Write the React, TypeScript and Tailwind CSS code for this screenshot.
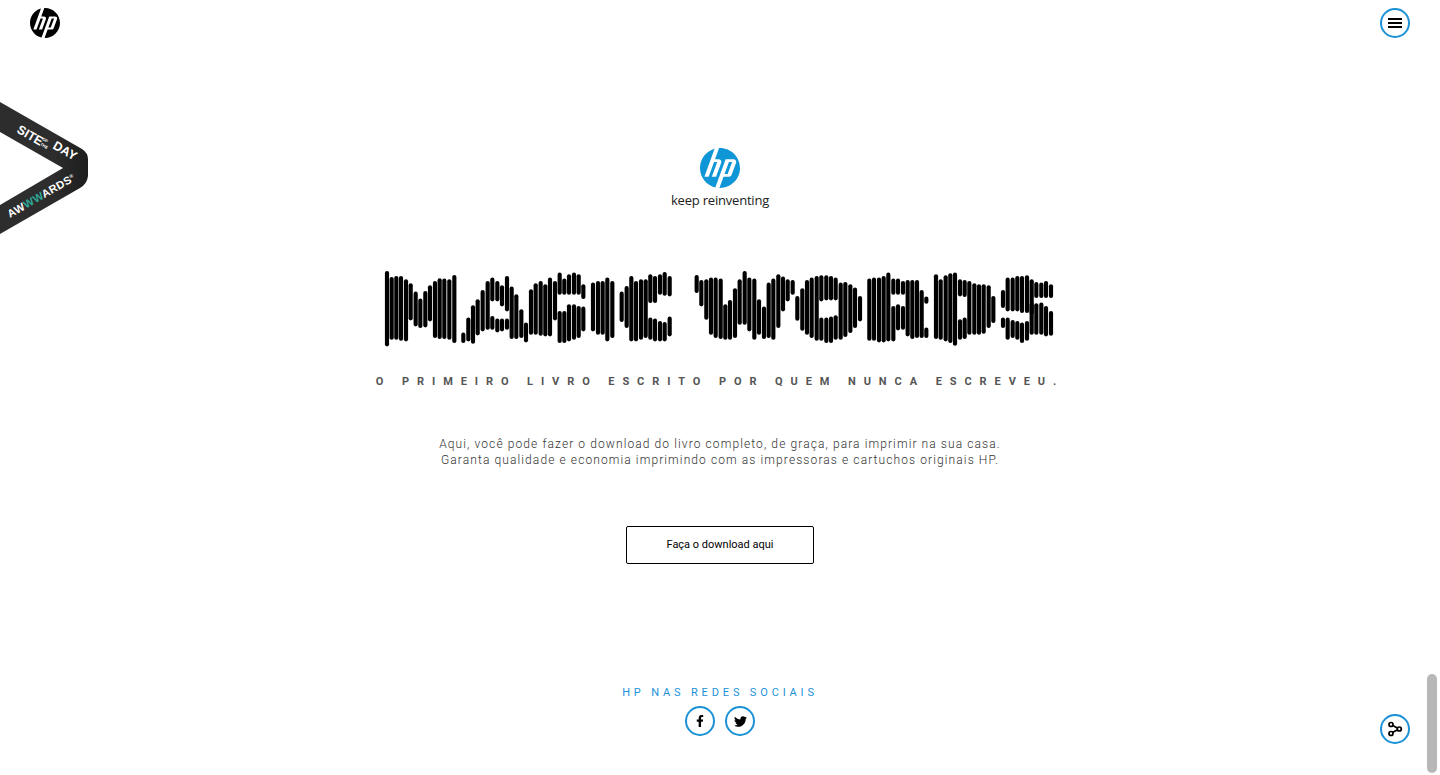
import { FaFacebookF, FaTwitter } from 'react-icons/fa';
import { SiHp } from 'react-icons/si';

// bars of the "magic words" logo: [x, top, bottom, top2?, bottom2?] in 1/3 px
const bars: number[][] = [
    [36, 38, 258], [50, 56, 238], [64, 53, 238], [78, 53, 241], [93, 63, 243], [107, 75, 180], [122, 100, 198], [136, 121, 203],
    [151, 98, 201], [165, 81, 183], [180, 68, 233], [194, 60, 236], [208, 61, 236], [223, 63, 238], [238, 50, 248],
    [265, 223, 248], [280, 178, 243], [294, 141, 250], [308, 123, 225], [323, 95, 213], [338, 68, 208], [352, 58, 123, 173, 208],
    [367, 68, 123, 181, 216], [381, 81, 138, 181, 213], [396, 53, 153, 181, 208], [410, 85, 236], [424, 108, 236], [439, 153, 233], [453, 193, 246],
    [468, 93, 223], [482, 75, 223], [497, 68, 226], [511, 78, 228], [525, 58, 228], [540, 68, 180], [554, 43, 103, 158, 248],
    [568, 61, 103, 158, 248], [582, 48, 103, 138, 243], [597, 43, 103, 138, 238], [611, 48, 103, 143, 233], [625, 78, 116, 145, 213],
    [654, 73, 213], [669, 68, 223], [683, 68, 223], [697, 58, 243], [712, 68, 233],
    [740, 100, 185], [755, 83, 203], [769, 53, 243], [783, 68, 243], [798, 63, 238], [812, 63, 233], [826, 48, 128, 178, 238],
    [840, 53, 128, 181, 243], [855, 48, 103, 188, 243], [869, 41, 106, 191, 243], [884, 53, 108, 175, 228],
    [965, 50, 98], [979, 65, 138], [994, 63, 178], [1008, 58, 223], [1022, 58, 233], [1037, 61, 236],
    [1051, 138, 238], [1065, 125, 238], [1080, 90, 233], [1094, 63, 193], [1109, 38, 193], [1123, 58, 213], [1138, 61, 238],
    [1152, 123, 223], [1167, 145, 236], [1181, 73, 233], [1195, 61, 238], [1210, 48, 203], [1224, 55, 153], [1238, 63, 123], [1253, 65, 103],
    [1267, 113, 181], [1282, 90, 211], [1296, 65, 223], [1310, 58, 233], [1325, 53, 241], [1339, 51, 123, 178, 241],
    [1354, 51, 120, 178, 248], [1368, 53, 120, 175, 248], [1382, 58, 120, 171, 238], [1397, 73, 238], [1411, 71, 230], [1426, 78, 218], [1440, 88, 203], [1455, 113, 183],
    [1483, 61, 241], [1497, 58, 241], [1512, 58, 246], [1526, 53, 246], [1540, 43, 243], [1555, 61, 103, 143, 243], [1569, 61, 103, 138, 210],
    [1584, 68, 103, 143, 208], [1598, 65, 228], [1612, 65, 236], [1626, 65, 233], [1640, 95, 233], [1654, 115, 130, 208, 233],
    [1683, 48, 236], [1697, 63, 238], [1712, 51, 243], [1726, 45, 248], [1740, 43, 256], [1755, 63, 108, 183, 238], [1769, 65, 110, 178, 236],
    [1783, 68, 223], [1798, 75, 223], [1812, 78, 223], [1826, 78, 220], [1841, 81, 203], [1855, 113, 188],
    [1884, 95, 143, 178, 203], [1898, 58, 153, 178, 238], [1913, 58, 153, 185, 233], [1927, 53, 153, 188, 238], [1941, 53, 158, 193, 248],
    [1956, 51, 158, 188, 241], [1970, 63, 163, 133, 223], [1984, 71, 113, 135, 223], [1999, 73, 113, 133, 223], [2013, 68, 113, 143, 228], [2028, 78, 113, 158, 226],
];

function MagicWords() {
    return (
        <svg role="img" aria-label="Magic Words" width="680" height="85" viewBox="15 20 2040 255" className="block">
            <g stroke="#000" strokeWidth="12.5" strokeLinecap="round">
                {bars.map((b, i) => (
                    <g key={i}>
                        <line x1={b[0]} x2={b[0]} y1={b[1] + 3} y2={b[2] - 3} />
                        {b.length > 3 && <line x1={b[0]} x2={b[0]} y1={b[3] + 3} y2={b[4] - 3} />}
                    </g>
                ))}
            </g>
        </svg>
    );
}

function AwwwardsRibbon() {
    return (
        <svg width="90" height="136" viewBox="0 0 90 136" className="absolute left-0 top-[100px]">
            <defs>
                <linearGradient id="fold" x1="0" y1="0" x2="1" y2="0">
                    <stop offset="0.6" stopColor="#2d2d2d" />
                    <stop offset="1" stopColor="#1d1d1d" />
                </linearGradient>
            </defs>
            <path d="M0 2 L82 49 Q88 53 88 59 L88 76 Q87 84 80 88 L0 134 L0 105 L63 68 L0 32 Z" fill="url(#fold)" />
            <g fill="#fff" fontFamily="'Liberation Sans', sans-serif" fontWeight="700">
                <text x="16" y="32" fontSize="12.5" transform="rotate(30 16 32)" fontWeight="900">SITE</text>
                <text x="42" y="40" fontSize="4" transform="rotate(30 42 40)">OF</text>
                <text x="40" y="45" fontSize="4" transform="rotate(30 40 45)">THE</text>
                <text x="52" y="48" fontSize="12.5" transform="rotate(30 52 48)" fontWeight="900">DAY</text>
                <text x="10" y="118" fontSize="11" letterSpacing="0.4" transform="rotate(-30 10 118)">
                    AW<tspan fill="#2fa898">WW</tspan>ARDS<tspan fontSize="5" dy="-4">®</tspan>
                </text>
            </g>
        </svg>
    );
}

function CircleButton({ children, className = '' }: { children: React.ReactNode; className?: string }) {
    return (
        <a className={`flex h-[30px] w-[30px] items-center justify-center rounded-full border-2 border-[#1b92d6] bg-white text-black ${className}`}>
            {children}
        </a>
    );
}

export default function App() {
    return (
        <div className="relative h-[775px] overflow-hidden bg-white font-['Roboto',sans-serif]">
            <SiHp className="absolute left-[30px] top-[8px] h-[30px] w-[30px] text-black" />
            <CircleButton className="absolute right-[30px] top-[8px]">
                <span className="flex w-[14px] flex-col gap-[2px]">
                    <span className="h-[2px] bg-black" />
                    <span className="h-[2px] bg-black" />
                    <span className="h-[2px] bg-black" />
                </span>
            </CircleButton>
            <CircleButton className="absolute right-[30px] top-[714px]">
                <svg width="16" height="16" viewBox="0 0 16 16" fill="none" stroke="#000" strokeWidth="1.7">
                    <line x1="4.5" y1="3.8" x2="12" y2="8" />
                    <line x1="4.5" y1="12" x2="12" y2="8" />
                    <circle cx="4" cy="3.5" r="2" fill="#fff" />
                    <circle cx="12.3" cy="8" r="2" fill="#fff" />
                    <circle cx="4" cy="12.5" r="2" fill="#fff" />
                </svg>
            </CircleButton>
            <AwwwardsRibbon />
            <div className="absolute right-[3px] top-[674px] h-[99px] w-[10px] rounded-full bg-[#b8b8b8]" />

            <main className="flex flex-col items-center pt-[148px]">
                <SiHp className="h-[40px] w-[40px] text-[#0f96d6]" />
                <p className="mt-[4px] text-[13px] leading-[17px] text-[#222] font-['Open_Sans',sans-serif] tracking-[-0.2px]">keep reinventing</p>
                <div className="mt-[57px]">
                    <MagicWords />
                </div>
                <h2 className="mt-[24px] text-[11px] font-bold leading-[14px] tracking-[0.72em] text-[#555]">O PRIMEIRO LIVRO ESCRITO POR QUEM NUNCA ESCREVEU.</h2>
                <p className="mt-[47px] text-center text-[12px] font-light leading-[16px] tracking-[1.1px] text-[#333]">
                    Aqui, você pode fazer o download do livro completo, de graça, para imprimir na sua casa.
                    <br />
                    Garanta qualidade e economia imprimindo com as impressoras e cartuchos originais HP.
                </p>
                <a className="mt-[58px] flex h-[38px] w-[188px] items-center justify-center rounded-[2px] border border-black text-[11px] text-black">Faça o download aqui</a>
                <h3 className="mt-[122px] text-[11px] leading-[14px] tracking-[0.35em] text-[#1b92d6]">HP NAS REDES SOCIAIS</h3>
                <div className="mt-[6px] flex gap-[10px]">
                    <CircleButton><FaFacebookF className="h-[12px] w-[12px]" /></CircleButton>
                    <CircleButton><FaTwitter className="h-[13px] w-[13px]" /></CircleButton>
                </div>
            </main>
        </div>
    );
}
